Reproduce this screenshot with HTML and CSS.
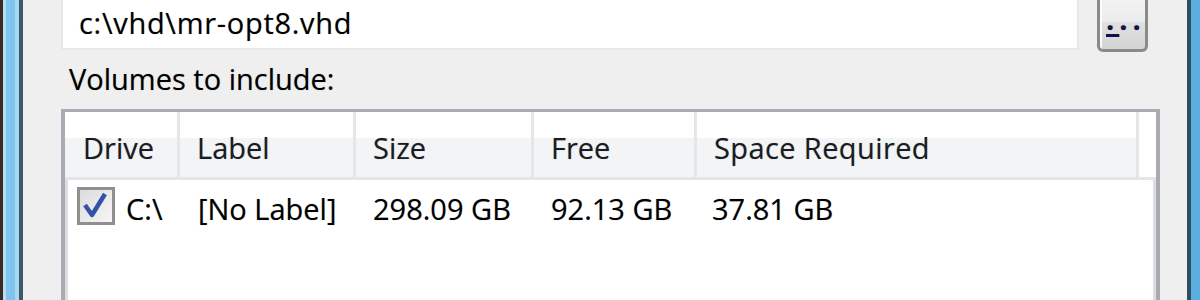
FILE: index.html
```html
<!DOCTYPE html>
<html>
<head>
<meta charset="utf-8">
<link rel="stylesheet" href="styles.css">
</head>
<body>
<div class="window">
  <div class="frame frame-left"></div>
  <div class="content">
    <div class="path-row">
      <div class="path">c:\vhd\mr-opt8.vhd</div>
      <div class="browse"><span class="acc">.</span>..</div>
    </div>
    <div class="caption">Volumes to include:</div>
    <div class="list">
      <div class="list-head">
        <div class="col c1">Drive</div>
        <div class="col c2">Label</div>
        <div class="col c3">Size</div>
        <div class="col c4">Free</div>
        <div class="col c5">Space Required</div>
        <div class="col filler"></div>
      </div>
      <div class="list-row">
        <div class="cell c1">
          <span class="check">
            <svg width="32" height="32" viewBox="0 0 32 32"><path d="M5 15 L12 25 L25 4" fill="none" stroke="#3553a6" stroke-width="4.5" stroke-linejoin="round"/></svg>
          </span>
          <span class="drive">C:\</span>
        </div>
        <div class="cell c2">[No Label]</div>
        <div class="cell c3">298.09 GB</div>
        <div class="cell c4">92.13 GB</div>
        <div class="cell c5">37.81 GB</div>
      </div>
    </div>
  </div>
  <div class="frame frame-right"></div>
</div>
</body>
</html>
```
FILE: styles.css
```css
html, body {
  margin: 0;
  padding: 0;
}
body {
  width: 1200px;
  height: 300px;
  overflow: hidden;
  background: #efefef;
  font-family: "Open Sans", "Noto Sans", "DejaVu Sans", sans-serif;
  font-size: 29px;
  color: #000;
  text-shadow: 0 0 1px rgba(0, 0, 0, 0.35);
}
.window {
  display: flex;
  height: 300px;
  overflow: hidden;
}
.frame {
  width: 23px;
  flex: none;
}
.frame-left {
  background: linear-gradient(to right,
    #3a2a20 0 3px, #b3def5 3px 6px, #80c4ec 6px 15px, #a9d8f2 15px 19px, #3e5868 19px 23px);
}
.frame-right {
  background: linear-gradient(to right,
    #2f4f5f 0 4px, #5aaee0 4px 16px, #8ccbf0 16px 18px, #3a2a20 18px 23px);
}
.content {
  flex: 1;
  padding: 0 27px 0 38px;
  display: flex;
  flex-direction: column;
}
.path-row {
  display: flex;
  flex: none;
  margin-top: -14px;
  padding-right: 2px;
}
.path {
  box-sizing: border-box;
  width: 1018px;
  height: 64px;
  background: #fff;
  border: 2px solid #e3e9ef;
  border-top-color: #abadb3;
  padding: 17px 16px 0;
  line-height: 36px;
  letter-spacing: 0.7px;
}
.browse {
  box-sizing: border-box;
  margin-left: 18px;
  width: 51px;
  height: 66px;
  border: 3px solid #8a8a8a;
  border-radius: 6px;
  background: linear-gradient(#f4f4f4 0, #ececec 55%, #e0e0e0 55%, #d4d4d4 100%);
  box-shadow: inset 2px 2px 0 #fbfbfb;
  padding: 12px 0 0 6px;
  line-height: 36px;
  font-weight: 700;
  letter-spacing: 5px;
  color: #10104a;
}
.acc {
  text-decoration: underline;
  text-decoration-thickness: 3px;
  text-underline-offset: 4px;
}
.caption {
  flex: none;
  margin: 9px 0 0 8px;
  line-height: 36px;
}
.list {
  flex: 1;
  min-height: 0;
  margin-top: 12px;
  box-sizing: border-box;
  background: #fff;
  border: 4px solid #a8abb1;
  border-top-width: 3px;
  border-bottom: 0;
  box-shadow: inset 3px 0 #dcdee2, inset -3px 0 #dcdee2;
}
.list-head {
  display: flex;
  height: 65px;
  border-bottom: 3px solid #e4e5e8;
  background: linear-gradient(#ffffff 0 40%, #f3f4f6 40% 100%);
  color: #1b1b24;
}
.col {
  box-sizing: border-box;
  padding: 18px 0 0 17px;
  line-height: 36px;
  border-right: 3px solid #e4e6ea;
  white-space: nowrap;
}
.c1 { width: 115px; padding-left: 18px; }
.c2 { width: 176px; }
.c3 { width: 178px; }
.c4 { width: 163px; }
.c5 { width: 442px; letter-spacing: 0.4px; }
.col.filler {
  flex: 1;
  border-right: none;
  background: #fff;
}
.list-row {
  display: flex;
  height: 50px;
}
.cell {
  box-sizing: border-box;
  padding: 11px 0 0 17px;
  line-height: 36px;
  white-space: nowrap;
}
.cell.c1 {
  display: flex;
  align-items: flex-start;
  padding: 7px 0 0 12px;
}
.check {
  box-sizing: border-box;
  width: 38px;
  height: 38px;
  border: 3px solid #8f8f8f;
  background: linear-gradient(135deg, #dcdcdc, #f6f6f6);
  display: flex;
  align-items: center;
  justify-content: center;
  flex: none;
}
.drive {
  margin: 4px 0 0 11px;
  line-height: 36px;
}
.cell.c2 { padding-left: 18px; }
.cell.c5 { padding-left: 15px; letter-spacing: 0; }
```
